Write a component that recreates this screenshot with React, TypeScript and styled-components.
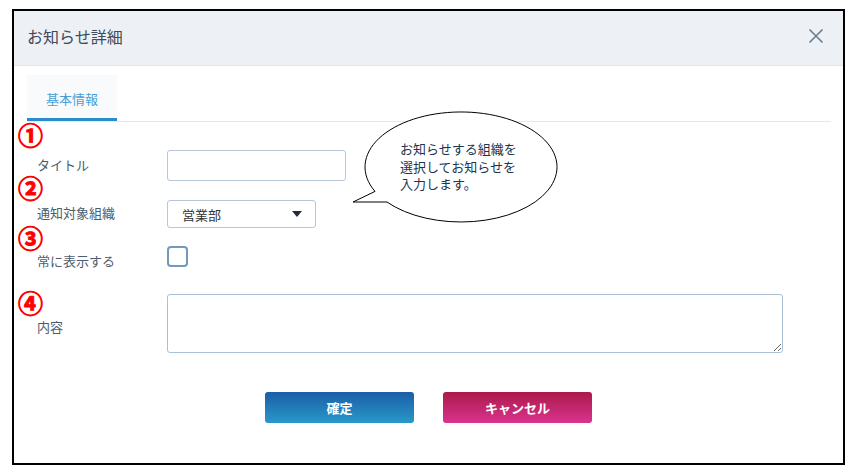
import React from "react";
import styled, { createGlobalStyle } from "styled-components";

const GlobalStyle = createGlobalStyle`
  html, body {
    margin: 0;
    padding: 0;
    background: #fff;
  }
  body {
    font-family: "Noto Sans CJK JP", "Noto Sans", sans-serif;
  }
`;

const Page = styled.div`
  padding: 9px 0 0 12px;
`;

const Dialog = styled.div`
  position: relative;
  box-sizing: border-box;
  width: 833px;
  height: 456px;
  border: 2px solid #000;
  background: #fff;
  display: flex;
  flex-direction: column;
`;

const Header = styled.div`
  box-sizing: border-box;
  height: 55px;
  background: #edf1f5;
  border-bottom: 1px solid #dfe5eb;
  display: flex;
  align-items: center;
  justify-content: space-between;
  padding: 0 19px 4px 13px;
`;

const Title = styled.h1`
  margin: 0;
  font-size: 16px;
  font-weight: 400;
  color: #3d4b5c;
`;

const CloseButton = styled.button`
  border: none;
  background: none;
  padding: 0;
  width: 16px;
  height: 16px;
  display: flex;
  >svg{
    stroke: #6b7c8f;
  }
`;

const TabBar = styled.div`
  margin: 0 12px 0 13px;
  padding-top: 9px;
  border-bottom: 1px solid #e3e8ee;
  display: flex;
`;

const Tab = styled.div<{ $active?: boolean }>`
  width: 90px;
  height: 40px;
  box-sizing: content-box;
  padding-top: 3px;
  display: flex;
  align-items: center;
  justify-content: center;
  font-size: 13px;
  color: #4a9fd5;
  background: ${p => (p.$active ? "#f8fafc" : "transparent")};
  border-bottom: 3px solid ${p => (p.$active ? "#2b8ccc" : "transparent")};
`;

const Form = styled.div`
  padding: 1px 0 0 4px;
  display: flex;
  flex-direction: column;
`;

const Field = styled.div<{ $h?: number }>`
  display: grid;
  grid-template-columns: 149px 1fr;
  grid-template-rows: 23px 1fr;
  height: ${p => (p.$h ? `${p.$h}px` : "auto")};
`;

const Marker = styled.span`
  grid-column: 1;
  grid-row: 1;
  color: #f00;
  font-size: 25px;
  font-weight: 700;
  line-height: 23px;
  height: 23px;
  -webkit-text-stroke: 0.9px #f00;
`;

const Label = styled.label<{ $top: number }>`
  grid-column: 1;
  grid-row: 2;
  padding: ${p => p.$top}px 0 0 19px;
  font-size: 13px;
  line-height: 16px;
  color: #4d5d6e;
`;

const Control = styled.div<{ $top: number }>`
  grid-column: 2;
  grid-row: 1 / 3;
  padding-top: ${p => p.$top}px;
`;

const TextInput = styled.input`
  display: block;
  box-sizing: border-box;
  width: 179px;
  height: 31px;
  border: 1px solid #b7c7d7;
  border-radius: 3px;
  outline: none;
`;

const SelectBox = styled.div`
  box-sizing: border-box;
  width: 149px;
  height: 28px;
  border: 1px solid #b7c7d7;
  border-radius: 3px;
  display: flex;
  align-items: center;
  justify-content: space-between;
  padding: 0 13px 0 14px;
  font-size: 13px;
  color: #333;
`;

const CheckBox = styled.span`
  display: block;
  box-sizing: border-box;
  width: 21px;
  height: 21px;
  border: 2px solid #7398bd;
  border-radius: 4px;
`;

const TextArea = styled.textarea`
  display: block;
  box-sizing: border-box;
  width: 616px;
  height: 59px;
  border: 1px solid #a9c0d6;
  border-radius: 3px;
  outline: none;
  margin: 0;
`;

const Actions = styled.div`
  margin-top: 39px;
  display: flex;
  justify-content: center;
  gap: 29px;
`;

const Button = styled.button<{ $kind: "ok" | "cancel" }>`
  width: 149px;
  height: 31px;
  border: none;
  border-radius: 3px;
  color: #fff;
  font-family: inherit;
  font-size: 13px;
  font-weight: 700;
  background: ${p =>
    p.$kind === "ok"
      ? "linear-gradient(#1a5ea7, #2a98c9)"
      : "linear-gradient(#aa1a4a, #da3390)"};
`;

const Bubble = styled.div`
  position: absolute;
  left: 336px;
  top: 97px;
  width: 210px;
  height: 118px;
  >svg{
    position: absolute;
    left: 0;
    top: 0;
  }
`;

const BubbleText = styled.p`
  position: relative;
  margin: 0;
  padding: 32px 0 0 50px;
  font-size: 13px;
  line-height: 17.5px;
  color: #1c3550;
`;

const App: React.FC = () => {
  return (
    <Page>
      <GlobalStyle />
      <Dialog>
        <Header>
          <Title>お知らせ詳細</Title>
          <CloseButton aria-label="閉じる">
            <svg width="16" height="16" viewBox="0 0 16 16" fill="none" strokeWidth="1.6">
              <path d="M1.5 1.5 L14.5 14.5 M14.5 1.5 L1.5 14.5" />
            </svg>
          </CloseButton>
        </Header>
        <TabBar>
          <Tab $active>基本情報</Tab>
        </TabBar>
        <Form>
          <Field $h={53}>
            <Marker>①</Marker>
            <Label $top={11}>タイトル</Label>
            <Control $top={27}>
              <TextInput />
            </Control>
          </Field>
          <Field $h={50}>
            <Marker>②</Marker>
            <Label $top={6}>通知対象組織</Label>
            <Control $top={24}>
              <SelectBox>
                <span>営業部</span>
                <svg width="10" height="6" viewBox="0 0 10 6">
                  <path d="M0 0 H10 L5 6 Z" fill="#1f2d3d" />
                </svg>
              </SelectBox>
            </Control>
          </Field>
          <Field $h={65}>
            <Marker>③</Marker>
            <Label $top={4}>常に表示する</Label>
            <Control $top={20}>
              <CheckBox />
            </Control>
          </Field>
          <Field>
            <Marker>④</Marker>
            <Label $top={5}>内容</Label>
            <Control $top={3}>
              <TextArea />
            </Control>
          </Field>
        </Form>
        <Actions>
          <Button $kind="ok">確定</Button>
          <Button $kind="cancel">キャンセル</Button>
        </Actions>
        <Bubble>
          <svg width="210" height="118" viewBox="0 0 210 118">
            <path
              d="M25 83.4 L3 94 L37 94 A96 55 0 1 0 25 83.4 Z"
              fill="#fff"
              stroke="#000"
              strokeWidth="1"
            />
          </svg>
          <BubbleText>
            お知らせする組織を
            <br />
            選択してお知らせを
            <br />
            入力します。
          </BubbleText>
        </Bubble>
      </Dialog>
    </Page>
  );
};

export default App;
